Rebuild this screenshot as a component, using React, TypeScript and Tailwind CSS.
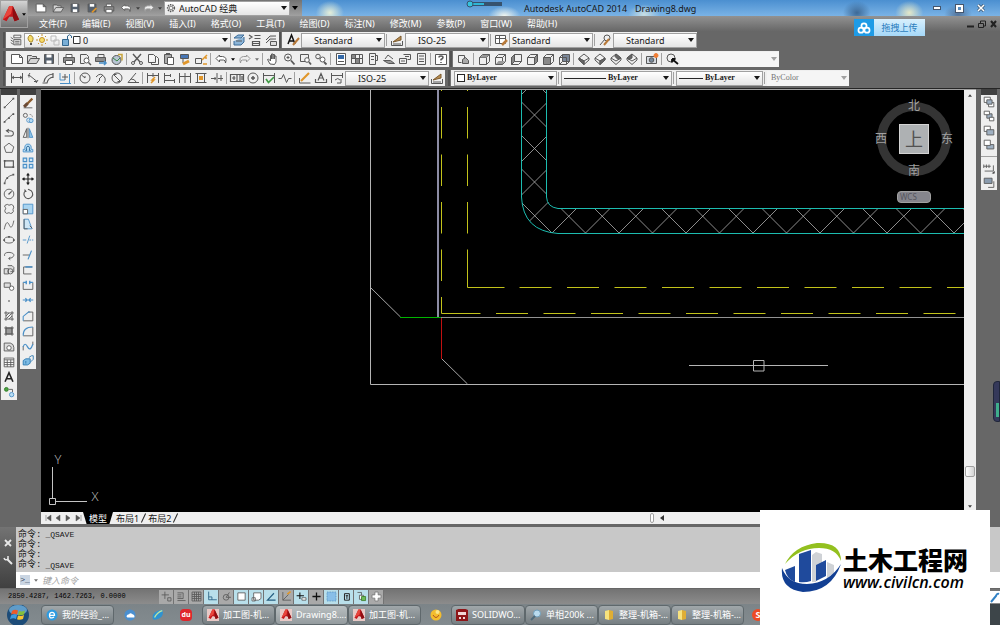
import React from 'react';
import clsx from 'clsx';

const INK = '#585858';
const BLUE = '#4a90c8';
const ORANGE = '#e0962a';

// 16x16 line icons
const icons: Record<string, React.ReactNode> = {
  // file
  new: <path d="M2.5 3.5h8l3 3v6h-11z M10.5 3.5v3h3" fill="#fff" />,
  open: <path d="M2.5 12.5v-8h4l1 1h4v2 M2.5 12.5l3-5h9l-3 5z" fill="#d5d5d5" />,
  save: <><path d="M3.5 3.5h9v9h-9z" fill="#56616e" /><path d="M5.5 3.5h5v3h-5z M5.5 9.5h5v3h-5z" fill="#fff" stroke="none" /></>,
  saveAs: <><path d="M3.5 3.5h9v9h-9z" fill="#56616e" /><path d="M5.5 3.5h5v3h-5z" fill="#fff" stroke="none" /><path d="M8 13l5-5" stroke={ORANGE} strokeWidth="2" /></>,
  print: <><path d="M5 6V3.500h6V6" fill="#fff" /><path d="M2.500 6.500h11v5h-11z" fill="#8d8d8d" /><path d="M4.500 9.500h7v4h-7z" fill="#fff" /></>,
  preview: <><path d="M3.500 12.500v-9h6l2 2v2 M3.500 12.500h4" /><circle cx="9.500" cy="9.500" r="2.500" fill="#fff" /><path d="M11.500 11.500l2.500 2.500" strokeWidth="1.500" /></>,
  publish: <><path d="M5 6V3.500h6V6" /><path d="M2.500 6.500h10v4h-10z" fill="#8d8d8d" /><path d="M6 12h7m-2-2l2 2l-2 2" stroke={BLUE} strokeWidth="1.500" /></>,
  globe: <><circle cx="7.500" cy="9" r="4.500" fill="#b9c6d4" /><path d="M4 7l4 3l3-3" stroke="#3d8a48" /><path d="M9 3.500h4v6" stroke="#c7a53b" strokeWidth="1.500" /></>,
  cut: <><path d="M4 3l7 8 M12 3l-7 8" strokeWidth="1.400" /><circle cx="4" cy="12" r="1.500" /><circle cx="12" cy="12" r="1.500" /></>,
  copy: <path d="M3.500 3.500h5l2 2v6h-7z M6.500 11.500v2h7v-6l-2-2h-1" fill="#f7f7f7" />,
  paste: <><path d="M3.500 3.500h7v9h-7z" fill="#aaa" /><path d="M6.500 6.500h6v7h-6z" fill="#fff" /><path d="M5 3h4" strokeWidth="2" /></>,
  match: <><path d="M3.500 3.500h8v4h-8z" fill="#4776b5" /><path d="M6 8v4" /><path d="M6 13l6-3" stroke={ORANGE} strokeWidth="3" /></>,
  blockEdit: <><path d="M2.500 7.500h6v5h-6z" /><path d="M9 9l5-5 M12 7h2 M10 13h4" stroke={ORANGE} strokeWidth="1.500" /></>,
  undo: <path d="M6.500 4L3 7.500L6.500 11V9h4q2 0 2 3q2-6-3-6.500H6.500z" fill="#fff" />,
  redo: <path d="M9.500 4L13 7.500L9.500 11V9h-4q-2 0-2 3q-2-6 3-6.500h3z" fill="#eee" stroke="#999" />,
  pan: <path d="M5 13L2.500 8.500l1-.5L5.500 10V4.500h1V8V3h1.500v5V3.500h1.500V8V5h1.500v6l-1.500 2.500z" fill="#fff" />,
  zoomRt: <><circle cx="7" cy="6.500" r="3.500" /><path d="M10 9.500l3.500 4" strokeWidth="1.800" /><path d="M5.500 6.500h3 M7 5v3" /></>,
  zoomWin: <><path d="M3.500 3.500h8v7h-8z" /><circle cx="10" cy="9" r="2.300" fill="#fff" /><path d="M12 11l2 2.500" strokeWidth="1.800" /></>,
  zoomPrev: <><circle cx="5" cy="5.500" r="2.300" /><circle cx="9.500" cy="8.500" r="2.500" fill="#fff" /><path d="M11 11l2.500 2.500" strokeWidth="1.800" /></>,
  properties: <><path d="M3.500 2.500h9v11h-9z" fill="#fff" /><path d="M5 4h6v4H5z" fill="#356aa8" stroke="none" /><path d="M5 10.500h6" /></>,
  designCenter: <><path d="M2.500 3.500h11v9h-11z M2.500 7.500h11 M6.500 3.500v9 M10.500 3.500v9" /><path d="M3 4h3v3H3z M7 8h3v4H7z" fill="#888" stroke="none" /></>,
  toolPalettes: <path d="M4.500 2.500h6v11h-6z M10.500 4.500h2v5h-2 M6 5.500h3 M6 8.500h3" />,
  sheetSet: <><path d="M2.500 9.500l5 3h6l-4-3z" fill="#999" /><path d="M4 8l3-4l5 4" /></>,
  markup: <path d="M2.500 7.500h7v5h-7z M6.500 3.500h7v5h-3 M4 10h4 M8 5.500h4" />,
  calc: <path d="M4.500 2.500h8v11h-8z M6 5h5 M6 8h5 M6 10.500h5" />,
  help: <><path d="M2.500 3.500h11v10h-11z" fill="#fff" /><path d="M6 6.500q0-1.500 2-1.500t2 1.500q0 1-2 2v1 M8 11v1" strokeWidth="1.500" /></>,
  // views
  namedView: <><path d="M2.500 4.500h6v6 M2.500 4.500v7h3" /><path d="M6.500 12.500v-4l3-2l3 3v3z" fill="#aaa" /></>,
  viewTop: <><path d="M3.500 6.500h7v7h-7z M10.500 13.500l3-3v-7h-7l-3 3 M10.500 6.500l3-3" /><path d="M4 6.500l2.500-2.500h6.500l-2.500 2.500z" fill="#999" stroke="none" /></>,
  viewBottom: <><path d="M3.500 6.500l3-3h7v7l-3 3h-7z M10.500 6.500v7 M3.500 6.500h7l3-3" /><path d="M4 13l2.500-3H13l-2.500 3z" fill="#999" stroke="none" /></>,
  viewLeft: <><path d="M3.500 6.500l3-3h7v7l-3 3h-7z M6.500 3.500v7h7 M6.500 10.500l-3 3" /><path d="M3.500 6.500l3-3v7l-3 3z" fill="#888" /></>,
  viewRight: <><path d="M3.500 6.500l3-3h7v7l-3 3h-7z M3.500 6.500h7v7" /><path d="M10.500 6.500l3-3v7l-3 3z" fill="#888" /></>,
  viewFront: <><path d="M3.500 6.500l3-3h7v7l-3 3 M10.500 6.500l3-3" /><path d="M3.500 6.500h7v7h-7z" fill="#888" /></>,
  viewBack: <><path d="M6.500 3.500h7v7h-7z" fill="#7b8798" /><path d="M3.500 6.500h7v7h-7z M3.500 6.500l3-3 M3.500 13.500l3-3 M10.500 13.500l3-3" /></>,
  swIso: <><path d="M8 3l5 4v2l-5 4.500L3 9V7z M3 7l5 3l5-3 M8 10v3.500" /><path d="M3 7l5 3v3.500L3 9z" fill="#666" /></>,
  seIso: <><path d="M8 3l5 4v2l-5 4.500L3 9V7z M3 7l5 3l5-3 M8 10v3.500" /><path d="M8 10l5-3v2l-5 4.500z" fill="#666" /></>,
  neIso: <><path d="M8 3l5 4v2l-5 4.500L3 9V7z M3 7l5 3l5-3" /><path d="M8 3l5 4l-3 1.500l-3-3z" fill="#666" /></>,
  nwIso: <><path d="M8 3l5 4v2l-5 4.500L3 9V7z M3 7l5 3l5-3" /><path d="M8 3v4L5 8.500L3 7z" fill="#666" /></>,
  camera: <><path d="M2.500 5.500h10v7h-10z" fill="#d5dbe2" /><circle cx="7.500" cy="9" r="2.300" fill="#77889b" /><circle cx="12" cy="4.500" r="2" fill="#ef7d35" stroke="#ef7d35" /></>,
  orbitBack: <><circle cx="7" cy="7" r="4" /><path d="M14 13L8 8 M8 8h3.500 M8 8v3.500" stroke="#111" strokeWidth="1.800" /></>,
  // dimensions
  dimLinear: <path d="M2.500 3v10 M13.500 3v10 M2.500 7.500h11 M5 6l-2 1.500l2 1.500 M11 6l2 1.500l-2 1.500" />,
  dimAligned: <path d="M3 6l2-3 M11 13l2-3 M4 5l8 6.500 M4 5v2.500 M12 11.500H9" />,
  dimArc: <path d="M3 12q1-7 9-8 M6 13q1-5 6-6 M1.500 13h5 M12 3v5" strokeWidth="1.200" />,
  dimOrdinate: <><path d="M3 3v7h5 M3 13.500h11 M12.500 4v9" stroke={BLUE} /><path d="M8 4v6 M5 7h6" /></>,
  dimRadius: <><circle cx="8" cy="8" r="5" /><path d="M8 8L4.500 5 M8 8V6" /></>,
  dimJogged: <path d="M3 7q5-6 9 1q1 3-1 5 M4 13l3-3l-1-1l4-4" />,
  dimDiameter: <><circle cx="8" cy="8" r="5" /><path d="M4.500 4.500l7 7 M4.500 4.500h3 M11.500 11.500h-3" /></>,
  dimAngular: <path d="M14 12.500H3L11 3 M6 9q4 0 5 3" />,
  dimQuick: <><path d="M2.500 3v10 M13.500 3v10 M2.500 5.500h11 M8 3v4" /><path d="M6 13l3-3H7l3-3" stroke={ORANGE} strokeWidth="1.500" /></>,
  dimBaseline: <path d="M3.500 3v10 M3.500 5.500h6 M9.500 4v3 M3.500 10.500h10 M13.500 9v4" />,
  dimContinue: <path d="M2.500 3v10 M8 3v10 M13.500 3v10 M2.500 6.500h11" />,
  dimSpace: <><path d="M2.500 3.500h11 M2.500 12.500h11 M4.500 3v10 M11.500 3v10" /><path d="M6 6h4v4H6z" fill={ORANGE} stroke="none" /></>,
  dimBreak: <path d="M2 8.500h5 M9 8.500h5 M8 3v10 M12 5v6 M6 7v3" />,
  tolerance: <path d="M1.500 4.500h13v7h-13z M8 4.500v7 M11 4.500v7 M3 8h3.500 M5 6v4 M13 6v4" strokeWidth="1.200" />,
  centerMark: <><circle cx="8" cy="8" r="5" /><path d="M8 6v4 M6 8h4" strokeWidth="1.500" /></>,
  inspect: <><path d="M2.500 3v10 M13.500 3v10 M2.500 5.500h11" /><path d="M5 9l2.500 3.500L13 7" stroke="#3f9a45" strokeWidth="1.700" /></>,
  jogLine: <path d="M1.500 8.500h3l2-4l3 8l2-4h3" />,
  dimEdit: <><path d="M2.500 8v5h11" /><path d="M4 11l8-8" stroke={ORANGE} strokeWidth="2.200" /></>,
  dimTextEdit: <path d="M2.500 9v4 M13.500 9v4 M2.500 12.500h11 M5 10.500l3-7l3 7 M6.500 8h3" strokeWidth="1.200" />,
  dimUpdate: <path d="M2.500 3v10 M13.500 3v5 M2.500 5.500h11 M6 10q3-3 5 0 M12 9v4H8" />,
  dimStyle: <><path d="M2.500 9v4.500h11V9 M4 12h8" /><path d="M4 10l8-6v4z" fill="#b98d50" stroke="#7b5a2e" /></>,
  // layers
  layerProps: <path d="M5.500 2.500h8v3h-8z M5.500 7.500h8v6h-8z M2 5l3 2 M2 8l3 2 M2 11l3 2 M7 9.500h5 M7 11.500h5" />,
  layerCurrent: <><path d="M3 6l4-3h6l-3 3z M3 9v4h7l3-3V5" fill="#8cb5d8" stroke="#3c6c99" /><path d="M5 9h6" /></>,
  layerPrev: <path d="M7.500 3.500h6 M7.500 6.500h6 M5.500 9.500h7v4h-7z M2 3l3 2l-3 2 M6 11.500h6" strokeWidth="1.200" />,
  layerState: <path d="M3 8l4-4h6 M3 11l4-4h6 M7.500 9.500h6v4h-6z" fill="#ddd" />,
  textStyle: <><path d="M3 12l3.500-9l3.500 9 M4.500 9h4" stroke="#111" strokeWidth="1.500" /><path d="M8 13l6-7" stroke="#b87a3a" strokeWidth="2" /></>,
  tableStyle: <><path d="M2.500 3.500h10v8h-10z M2.500 6.500h10 M6.500 3.500v8" fill="#fff" /><path d="M9 13l5-5" stroke="#b87a3a" strokeWidth="2.500" /></>,
  leaderStyle: <><circle cx="10" cy="6" r="3" /><path d="M3 13L8 7" /><path d="M7 13l5-6" stroke="#b87a3a" strokeWidth="2" /></>,
  // draw
  line: <><path d="M3 13L13 3" /><path d="M2 12h2v2H2z M12 2h2v2h-2z" fill={INK} stroke="none" /></>,
  xline: <><path d="M2 13L13 3" /><path d="M2 11.500h2v2H2z M7 7h2v2H7z M12 2.500h2v2h-2z" fill={INK} stroke="none" /></>,
  pline: <path d="M3 11.500h6q4 0 4-3t-4-3H6 M8 3.500l-3 2l3 2" strokeWidth="1.200" />,
  polygon: <path d="M8 2.500l5.500 4.200l-2 6.300h-7l-2-6.300z" />,
  rect: <><path d="M3 4.500h10v7H3z" strokeWidth="1.300" /><path d="M2 3.500h2v2H2z M12 10.500h2v2h-2z" fill={INK} stroke="none" /></>,
  arc: <><path d="M3 13Q4 5 13 3" /><path d="M2 12h2v2H2z M12 2h2v2h-2z M5 6h2v2H5z" fill={INK} stroke="none" /></>,
  circle: <><circle cx="8" cy="8" r="5.500" /><path d="M8 8l3-3 M7 8h2" strokeWidth="1.400" /></>,
  cloud: <path d="M4.500 7Q2 6 3.500 3.700q3-2 4.500 0q3-2 5 .5q1 3-.5 4q1.500 3-1 4.500q-2 1-3.500-.5q-3 2-4.500-.5q-1-2 1-4.700z" />,
  spline: <path d="M2.500 13C5 2 7 5 8.500 8.500S12 11 13.500 3" />,
  ellipse: <><ellipse cx="8" cy="8" rx="5.500" ry="3.500" /><path d="M7 3.500h2v2H7z M1.500 7h2v2h-2z M12.500 7h2v2h-2z" fill={INK} stroke="none" /></>,
  ellipseArc: <path d="M3 9Q2 5 8 5q6 .5 5.500 3.500T8 12 M9.500 10.500L7.500 12l2 1.500" />,
  insert: <><path d="M6.500 3h5l2 2v5h-4 M2.500 6.500h5v6h-5z" fill="#ddd" /><circle cx="9.500" cy="9.500" r="3" /></>,
  makeBlock: <><path d="M2.500 4.500h7v5h-7z" fill="#ddd" /><circle cx="11" cy="10.500" r="2.500" fill="#fff" /></>,
  point: <path d="M7.200 7.200h1.600v1.600H7.200z" fill={INK} stroke="none" />,
  hatch: <path d="M2.500 4.500h11 M2.500 11.500h11 M4.500 2.500v11 M11.500 2.500v11 M4.500 8l3.500-3.500 M5 11l6-6 M8 11.500L11.500 8" />,
  gradient: <><path d="M4.500 4.500h7v7h-7z" fill="#999" /><path d="M2.500 4.500h11 M2.500 11.500h11 M4.500 2.500v11 M11.500 2.500v11" /></>,
  region: <><path d="M2.500 3.500h7q4 1 4 5v4h-11z" fill="#ddd" /><circle cx="8" cy="9" r="2.500" fill="#fff" /></>,
  table: <path d="M2.500 3.500h11v10h-11z M2.500 5.500h11 M2.500 8.500h11 M2.500 11h11 M6 5.500v8 M10 5.500v8" fill="#fff" />,
  mtext: <path d="M3.500 13.500L8 3l4.500 10.500 M5 10h6" stroke="#222" strokeWidth="1.800" />,
  addSelected: <><circle cx="5" cy="5" r="2.200" fill="#4aa23f" stroke="#2f7a28" /><path d="M8 5h4v3" /><circle cx="11" cy="11" r="2.500" fill="#b7dcf3" stroke={BLUE} /></>,
  // modify
  erase: <><path d="M3 13.500h10" /><path d="M6 10l7-7" stroke="#8a5a2c" strokeWidth="2.500" /><path d="M3.500 12.500l4-4" stroke="#6b4a35" strokeWidth="3.500" /></>,
  copyObj: <><circle cx="5" cy="5" r="2.300" /><path d="M10 4q3 0 3 3" strokeDasharray="1 1" /><circle cx="9" cy="10.500" r="2.500" stroke={BLUE} /><circle cx="11.500" cy="11" r="2.300" fill="#b7dcf3" stroke={BLUE} /></>,
  mirror: <><path d="M6.500 3v10H2.500z" /><path d="M9.500 3v10h4z" fill="#8ec4e8" stroke={BLUE} /><path d="M8 2v12" /></>,
  offset: <><path d="M2.500 12.500v-3h2q-1-6 3.500-6t3.500 6h2v3z" stroke={BLUE} fill="#b7dcf3" /><path d="M5 11h1.500q-1-5 1.500-5t1.500 5H11" stroke="#1e5f95" /></>,
  array: <path d="M2.500 2.500h4v4h-4z M9.500 2.500h4v4h-4z M2.500 9.500h4v4h-4z M9.500 9.500h4v4h-4z" stroke={BLUE} fill="#cfe6f5" strokeWidth="1.300" />,
  move: <path d="M8 2v12 M2 8h12 M6.500 4L8 2l1.500 2 M6.500 12L8 14l1.500-2 M4 6.500L2 8l2 1.500 M12 6.500L14 8l-2 1.500" stroke="#222" strokeWidth="1.300" />,
  rotate: <path d="M5 4.500a5 5 0 1 0 5-1 M4 3l2 2.500 M10 3.500l-2-1" strokeWidth="1.300" />,
  scale: <><path d="M2.500 2.500h11v11h-11z" fill="#a9d4f0" stroke={BLUE} /><path d="M2.500 8.500h5v5h-5z" fill="#fff" /></>,
  stretch: <><path d="M3.500 2.500h5l4 11h-9z" stroke={BLUE} fill="#cfe6f5" /><path d="M3.500 2.500v11h4 M10 10l3 3" /></>,
  trim: <><path d="M2 8h4 M7 12l3-9" stroke={BLUE} /><path d="M9.500 8H14" stroke={BLUE} strokeDasharray="2 1" /></>,
  extend: <><path d="M2 8h8" /><path d="M8 13l4-10" stroke={BLUE} strokeWidth="1.300" /></>,
  breakPt: <><path d="M3 12.500v-8h10 M3 12.500h9" stroke={INK} /><path d="M5 4.500h8" stroke={BLUE} strokeWidth="1.700" /></>,
  breakObj: <><path d="M2.500 5v8h11V5" /><path d="M2.500 5h4 M9.500 5h4 M6 3v4 M10 3v4" stroke={BLUE} strokeWidth="1.600" /></>,
  join: <path d="M2 8h12 M5 6l2 2l-2 2 M11 6L9 8l2 2" stroke={BLUE} strokeWidth="1.300" />,
  chamfer: <><path d="M2.500 13.500h11v-10H8" /><path d="M2.500 13.500v-5l6-5h2" stroke={BLUE} strokeWidth="1.200" /></>,
  fillet: <><path d="M2.500 13.500h11v-10" /><path d="M2.500 13.500Q2 3.500 13.500 3.500" stroke={BLUE} strokeWidth="1.200" /></>,
  blend: <><path d="M2.500 13V8 M13.500 3v4" /><path d="M2.500 9q2-6 5 0t6-3" stroke={BLUE} strokeWidth="1.400" /></>,
  explode: <><path d="M2.500 7.500l3-2h5v5l-3 2h-5z" fill="#7fbce4" stroke="#2c78b0" /><path d="M9 4l3-2h2v4l-3 3 M5.500 8v3" stroke="#2c78b0" /></>,
  // draw order
  orderFront: <><path d="M2.500 2.500h7v6h-7z M7.500 8.500h6v5h-6z" fill="#fff" /><path d="M5.500 5.500h6v5h-6z" fill="#9fb0c2" /></>,
  orderBack: <><path d="M5.500 5.500h6v5h-6z" fill="#9fb0c2" /><path d="M2.500 2.500h6v4h-6z M8.500 9.500h5v4h-5z" fill="#fff" /></>,
  orderAbove: <><path d="M2.500 2.500h7v6h-7z" fill="#fff" /><path d="M5.500 6.500h8v6h-8z" fill="#9fb0c2" /></>,
  orderUnder: <><path d="M5.500 7.500h8v5h-8z" fill="#9fb0c2" /><path d="M2.500 2.500h7v6h-7z" fill="#fff" /></>,
  orderText: <><path d="M2 4v4 M5 4v4 M8 4v4 M2 6h8 M3 11.500h10V5" /><path d="M12 14l2-2v2z" fill="#000" /></>,
  orderHatch: <><path d="M2.500 2.500h9v6h-9z" fill="#8a9bae" /><path d="M13.500 6v7H7" /></>,
  // drafting aids
  infer: <path d="M6 2v9 M2 6h9 M9.500 9.500h4v4h-4z" />,
  snap: <path d="M3 3.500h7v7H3 M3 6h5 M3 8.500h5 M3 13h10" />,
  grid: <path d="M2.500 2.500h11v11h-11z M2.500 5.500h11 M2.500 8h11 M2.500 10.500h11 M5.500 2.500v11 M8 2.500v11 M10.500 2.500v11" />,
  ortho: <path d="M4.500 2v10h10 M4.500 8.500h4v3.500" stroke="#245d80" />,
  polar: <><circle cx="7.500" cy="9" r="3.500" /><path d="M7.500 9h6 M7.500 9l4-6" /></>,
  osnap: <path d="M3.500 3.500h9v9h-9z" fill="#fff" stroke="#555" />,
  osnap3d: <path d="M4.500 3.500h9v7l-3 2h-6z M2.500 9.500h4v4h-4z" fill="#fff" />,
  otrack: <path d="M13 12.500H3L11 4" stroke="#245d80" strokeWidth="1.400" />,
  ducs: <><path d="M3.500 2.500v10h10 M3.500 12.500l7-7" /><path d="M9 5l4-3" stroke={ORANGE} strokeWidth="2" /></>,
  dyn: <><path d="M6 3v8 M2 7h9" stroke="#111" strokeWidth="1.300" /><path d="M8.500 9.500h5v3h-5z" fill="#fff" /></>,
  lwt: <path d="M8 3v10 M3 8h10" stroke="#111" strokeWidth="1.600" />,
  tpy: <path d="M2.500 2.500h11v11h-11z" fill="#88bfe8" stroke="#4a86b8" strokeDasharray="1 1" />,
  qp: <path d="M5.500 4.500h6v8h-6z M7 7h3 M8.500 7v4" stroke="#222" strokeWidth="1.200" />,
  selCycle: <><path d="M3 3h5v5" /><path d="M5.500 6.500h5v5h-5z" fill="#fff" /><path d="M8 8h5v5H8z" fill="#6dbb56" stroke="#3b7c2a" /></>,
  monitor: <path d="M6 2.500h4V6h3.500v4H10v3.500H6V10H2.500V6H6z" fill="#fff" stroke="#777" />,
  gear: <><circle cx="8" cy="8" r="4.500" strokeWidth="2" strokeDasharray="2 1.200" /><circle cx="8" cy="8" r="2.500" /></>,
};

const Icon = ({ name, className = 'size-4' }: { name: string; className?: string }) => (
  <svg viewBox="0 0 16 16" fill="none" stroke={INK} className={clsx('shrink-0', className)} aria-hidden="true">
    {icons[name]}
  </svg>
);

const Caret = ({ className, small }: { className?: string; small?: boolean }) => (
  <svg viewBox="0 0 6 4" fill="currentColor" className={clsx('shrink-0', small ? 'h-[3px] w-1' : 'h-1 w-1.5', className)} aria-hidden="true">
    <path d="M0 0h6L3 4z" />
  </svg>
);

const Tools = ({ items }: { items: string[] }) => (
  <>
    {items.map((item, i) =>
      item === '|' ? (
        <span key={i} className="mx-px h-3 w-0.5 border-l border-neutral-400" />
      ) : (
        <button key={i} aria-label={item} className="flex h-4 w-4 items-center justify-center">
          <Icon name={item} />
        </button>
      )
    )}
  </>
);

type ComboProps = {
  label: string;
  value: string;
  className: string;
  textClass?: string;
  children?: React.ReactNode;
};

const Combo = ({ label, value, className, textClass = 'pl-2 text-[9px]', children }: ComboProps) => (
  <div className={clsx('flex h-[15px] items-center gap-0.5 border border-neutral-400 bg-linear-to-b from-white to-neutral-200 pr-0.5', className)}>
    {children}
    <select aria-label={label} className={clsx('h-full min-w-0 flex-1 appearance-none bg-transparent text-neutral-900', textClass)}>
      <option>{value}</option>
    </select>
    <Caret className="text-neutral-900" />
  </div>
);

const Bar = ({ children }: { children?: React.ReactNode }) => (
  <div className="flex h-4 items-center bg-[#efefef]">
    <span className="mr-[3px] h-full w-[3px] border-r border-neutral-500 bg-neutral-600" />
    {children}
  </div>
);

const Palette = ({ items, className }: { items: string[]; className: string }) => (
  <div className={clsx('flex w-4 shrink-0 flex-col bg-[#efefef]', className)}>
    <span className="h-[6px] bg-neutral-700" />
    {items.map((item, i) =>
      item === '|' ? (
        <span key={i} className="my-1 h-px bg-neutral-400" />
      ) : (
        <button key={i} aria-label={item} className="flex min-h-0 flex-1 items-center justify-center">
          <Icon name={item} className="size-[14px]" />
        </button>
      )
    )}
  </div>
);

const menus = ['文件(F)', '编辑(E)', '视图(V)', '插入(I)', '格式(O)', '工具(T)', '绘图(D)', '标注(N)', '修改(M)', '参数(P)', '窗口(W)', '帮助(H)'];

const AcadMark = ({ className }: { className: string }) => (
  <svg viewBox="0 0 20 20" className={clsx('shrink-0', className)} aria-hidden="true">
    <path d="M8 1h4l7 15-5 2-2-5H8l-3 5-4-2z" fill="#c4161c" />
    <path d="M8 1h4l-2 9-9 6z" fill="#e8453c" />
    <path d="M12 1l7 15-5 2-2-5z" fill="#8e0e12" />
  </svg>
);

const Header = () => (
  <header className="flex h-[31px] shrink-0">
    <button aria-label="AutoCAD" className="flex h-7 w-7 shrink-0 items-center justify-center gap-0.5 border border-neutral-400 bg-linear-to-b from-neutral-300 to-neutral-500">
      <AcadMark className="size-[18px]" />
      <Caret small />
    </button>
    <div className="flex min-w-0 flex-1 flex-col">
      <div className="flex h-4">
        <div className="flex w-[274px] shrink-0 items-center bg-linear-to-b from-neutral-500 to-neutral-400 pl-1">
          {['new', 'open', 'save', 'saveAs', 'print', 'undo'].map((n) => (
            <button key={n} aria-label={n} className="flex w-[17px] justify-center">
              <Icon name={n} className="size-[14px]" />
            </button>
          ))}
          <Caret small className="mx-0.5 text-neutral-700" />
          <button aria-label="redo"><Icon name="redo" className="size-[14px]" /></button>
          <Caret small className="mx-0.5 text-neutral-700" />
          <Combo label="工作空间" value="AutoCAD 经典" className="w-[126px]" textClass="text-[9px]">
            <Icon name="gear" className="size-3" />
          </Combo>
          <Caret className="ml-0.5" />
        </div>
        <div className="relative flex min-w-0 flex-1 items-center bg-[radial-gradient(ellipse_14px_12px_at_4%_80%,#e5eed8,transparent),radial-gradient(ellipse_16px_10px_at_29%_100%,#f3f6ee,transparent),radial-gradient(ellipse_16px_10px_at_49%_90%,#c9dfe4,transparent),radial-gradient(ellipse_14px_12px_at_79.5%_80%,#3d6996,transparent),radial-gradient(ellipse_14px_12px_at_87%_80%,#e5e8c8,transparent),radial-gradient(ellipse_14px_10px_at_94%_90%,#54749a,transparent),linear-gradient(#4b8fd0,#7ab3e6)] text-[9px] text-neutral-900">
          <svg viewBox="0 0 40 8" className="absolute top-0 left-[162px] h-2 w-10" aria-hidden="true">
            <path d="M6 4h32" stroke="#36526e" strokeWidth="4" />
            <path d="M6 4h14" stroke="#2fb6d6" strokeWidth="2" />
            <circle cx="6" cy="4" r="3" fill="#35c3de" stroke="#36526e" />
          </svg>
          <span className="ml-[222px]">Autodesk AutoCAD 2014</span>
          <span className="ml-2">Drawing8.dwg</span>
          <div className="ml-auto flex gap-1.5 pr-[11px] text-white">
            <button aria-label="最小化" className="flex h-3 w-4 items-center justify-center"><span className="h-1 w-2 border border-slate-600 bg-white" /></button>
            <button aria-label="还原" className="flex h-3 w-4 items-center justify-center"><span className="size-[7px] border-2 border-white outline outline-slate-600" /></button>
            <button aria-label="关闭" className="flex h-3 w-4 items-center justify-center">
              <svg viewBox="0 0 8 8" className="size-2" aria-hidden="true"><path d="M1 1l6 6M7 1L1 7" stroke="#3c566f" strokeWidth="3" /><path d="M1 1l6 6M7 1L1 7" stroke="#fff" strokeWidth="1.5" /></svg>
            </button>
          </div>
        </div>
      </div>
      <nav className="relative flex flex-1 items-center gap-[15px] bg-linear-to-b from-[#929292] to-[#686868] pl-[11px] text-[9px] text-white">
        {menus.map((m) => (
          <button key={m} className="whitespace-nowrap">{m}</button>
        ))}
        <button className="absolute top-[3px] right-[75px] z-10 flex h-[17px] w-[71px] items-center bg-linear-to-b from-[#d8effc] to-[#a5d8f8] text-[9px] text-[#2c7dbd]">
          <span className="flex h-full w-5 items-center justify-center bg-[#1f9be6]">
            <svg viewBox="0 0 16 14" fill="none" stroke="#fff" strokeWidth="2" className="h-3 w-3.5" aria-hidden="true">
              <circle cx="8" cy="4.500" r="3" /><circle cx="4.500" cy="9.500" r="3" /><circle cx="11.500" cy="9.500" r="3" />
            </svg>
          </span>
          <span className="flex-1 text-center">拖拽上传</span>
        </button>
        <svg viewBox="0 0 32 8" fill="none" stroke="#222" className="absolute right-0.5 h-2 w-8" aria-hidden="true">
          <path d="M1 6.500h7" strokeWidth="2" />
          <path d="M12.500 3.500h5v4h-5z M14.500 3V1h5v5h-2" />
          <path d="M25 1l5 6M30 1l-5 6" strokeWidth="2" />
        </svg>
      </nav>
    </div>
  </header>
);

const byLayerText = 'font-["Liberation_Serif"] text-[8px] font-bold';

const Toolbars = () => (
  <div className="flex shrink-0 flex-col items-start gap-[3px] pt-px pb-0.5 pl-[3px]">
    <div className="flex">
      <Bar>
        <button aria-label="图层特性" className="mr-px"><Icon name="layerProps" className="size-[14px]" /></button>
        <Combo label="图层" value="0" className="w-[207px]" textClass="text-[9px]">
          <svg viewBox="0 0 56 14" fill="none" className="h-3.5 w-14" aria-hidden="true">
            <path d="M5 9Q1 5 5 2q5 2 2 7z" fill="#f6dc6a" stroke="#a98b2e" /><path d="M5 11h2" stroke="#555" strokeWidth="2" />
            <circle cx="17" cy="7" r="2.500" fill="#f6dc6a" stroke="#c4932c" /><path d="M17 1v2M17 11v2M11 7h2M21 7h2M13 3l1 1M20 10l1 1M21 3l-1 1M14 10l-1 1" stroke="#c4932c" />
            <path d="M26 3h5v5h-5z M29 7h5v5h-5z" stroke="#bbb" />
            <path d="M37.500 6.500h6v6h-6z" fill="#79aed6" stroke="#33678f" /><path d="M42.500 6V3q2-2.500 4 0v2" stroke="#33678f" />
            <path d="M48.500 3.500h6.500v7h-6.500z" fill="#fff" stroke="#333" />
          </svg>
        </Combo>
        <Tools items={['layerCurrent', 'layerPrev', 'layerState']} />
      </Bar>
      <Bar>
        <Tools items={['textStyle']} />
        <Combo label="文字样式" value="Standard" className="w-[84px]" textClass="pl-3 text-[9px]" />
        <Tools items={['|', 'dimStyle']} />
        <Combo label="标注样式" value="ISO-25" className="w-[84px]" textClass="pl-3 text-[9px]" />
        <Tools items={['|', 'tableStyle']} />
        <Combo label="表格样式" value="Standard" className="w-[84px]" textClass="pl-0.5 text-[9px]" />
        <Tools items={['|', 'leaderStyle']} />
        <Combo label="多重引线样式" value="Standard" className="w-[84px]" textClass="pl-3 text-[9px]" />
      </Bar>
    </div>
    <div className="flex gap-px">
      <Bar>
        <Tools items={['new', 'open', 'save', '|', 'print', 'preview', 'publish', 'globe', '|', 'cut', 'copy', 'paste', 'match', 'blockEdit', '|', 'undo']} />
        <Caret small className="mx-0.5" />
        <Tools items={['redo']} />
        <Caret small className="mx-0.5 text-neutral-500" />
        <Tools items={['|', 'pan', 'zoomRt', 'zoomWin', 'zoomPrev', '|', 'properties', 'designCenter', 'toolPalettes', 'sheetSet', 'markup', 'calc', '|', 'help']} />
      </Bar>
      <Bar>
        <Tools items={['namedView', '|', 'viewTop', 'viewBottom', 'viewLeft', 'viewRight', 'viewFront', 'viewBack', '|', 'swIso', 'seIso', 'neIso', 'nwIso', '|', 'camera', '|', 'orbitBack']} />
        <div className="flex h-[15px] w-[99px] items-center bg-neutral-100 pr-0.5">
          <select aria-label="视图" disabled className="h-full min-w-0 flex-1 appearance-none bg-transparent"><option /></select>
          <Caret className="text-neutral-400" />
        </div>
      </Bar>
    </div>
    <div className="flex gap-[3px]">
      <Bar>
        <Tools items={['dimLinear', 'dimAligned', 'dimArc', 'dimOrdinate', '|', 'dimRadius', 'dimJogged', 'dimDiameter', 'dimAngular', '|', 'dimQuick', 'dimBaseline', 'dimContinue', 'dimSpace', 'dimBreak', '|', 'tolerance', 'centerMark', 'inspect', 'jogLine', '|', 'dimEdit', 'dimTextEdit', 'dimUpdate']} />
        <Combo label="当前标注样式" value="ISO-25" className="w-[84px]" textClass="pl-3 text-[9px]" />
        <Tools items={['dimStyle']} />
      </Bar>
      <Bar>
        <Combo label="颜色" value="ByLayer" className="w-[103px] pl-0.5" textClass={byLayerText}>
          <span className="size-2 border border-neutral-800 bg-white" />
        </Combo>
        <Tools items={['|']} />
        <Combo label="线型" value="ByLayer" className="w-[111px] pl-0.5" textClass={byLayerText}>
          <span className="h-px w-[42px] bg-neutral-800" />
        </Combo>
        <Tools items={['|']} />
        <Combo label="线宽" value="ByLayer" className="w-[87px] pl-0.5" textClass={byLayerText}>
          <span className="h-px w-6 bg-neutral-800" />
        </Combo>
        <Tools items={['|']} />
        <div className="flex h-[15px] w-[82px] items-center bg-neutral-100 pr-0.5 pl-1">
          <select aria-label="打印样式" disabled className='h-full min-w-0 flex-1 appearance-none bg-transparent font-["Liberation_Serif"] text-[8px] text-neutral-500'>
            <option>ByColor</option>
          </select>
          <Caret className="text-neutral-400" />
        </div>
      </Bar>
    </div>
  </div>
);

const hatchY = [81.5, 115, 148.5, 182];
const hatchX = Array.from({ length: 40 }, (_, i) => 568.5 + i * 33.5);

const Drawing = () => (
  <div className="relative min-w-0 flex-1 overflow-hidden bg-black">
    <svg className="absolute inset-0 h-full w-full" fill="none" aria-label="Drawing8">
      <g transform="translate(-41 -90)">
        <path d="M370.500 90V384.500H2000" stroke="#b4b4b4" />
        <path d="M438 90V317" stroke="#8c8ca4" strokeWidth="2" />
        <path d="M441 317.500H2000" stroke="#929292" />
        <path d="M370.500 287.500l30 29.500 M441.500 358.500l26 25.500" stroke="#a8a8a8" />
        <path d="M400 317.500h41" stroke="#00b400" />
        <path d="M441.500 318v41" stroke="#c01010" />
        <g stroke="#c2c21a">
          <path d="M441.500 59.500V313.500" strokeDasharray="31.500 16" />
          <path d="M467.500 59.500V240" strokeDasharray="31.500 16" />
          <path d="M467.500 249.500V287.500h37" />
          <path d="M519.500 287.500H2000" strokeDasharray="32 15.500" />
          <path d="M441.500 313.500h39" />
          <path d="M496 313.500H2000" strokeDasharray="32 15.500" />
        </g>
        <g stroke="#b0b0b0" strokeWidth="0.800">
          {hatchY.map((y) => (
            <path key={y} d={`M521.500 ${y - 13}l25 25 M521.500 ${y + 13}l25-25`} />
          ))}
          <path d="M522 203l30 30 M548.500 202l-19 19" />
          {hatchX.map((x) => (
            <path key={x} d={`M${x - 7.500} 208.500l24.500 24.500 M${x - 16.500} 233l24.500-24.500`} />
          ))}
        </g>
        <path d="M521.500 90V197Q523 231 558 233.500H2000 M546.500 90V197Q547 207 558 208.500H2000" stroke="#1cbcb0" />
        <path d="M689 365.500h64 M764 365.500h64 M753.500 360.500h10.500v10.500h-10.500z M753 365.500h11" stroke="#b5b5b5" />
        <path d="M52.500 467V498 M56 501.500H87 M49.500 498.500h6v6h-6z" stroke="#c4c4c4" />
        <g fill="#c4c4c4" fontSize="13" fontWeight="300" fontFamily="Open Sans, sans-serif" textAnchor="middle">
          <text x="58" y="464">Y</text>
          <text x="95" y="501">X</text>
        </g>
      </g>
    </svg>
    <div className="absolute top-[12px] right-[12px] flex w-[76px] flex-col items-center text-[12px] leading-none text-neutral-400">
      <div className="relative flex size-[74px] items-center justify-center rounded-full border-[9px] border-[#343434]">
        <button className="flex size-[30px] items-center justify-center border border-neutral-300 bg-[#aeb1b3] text-lg leading-none text-neutral-600">上</button>
        <span className="absolute top-[-11px]">北</span>
        <span className="absolute bottom-[-10px]">南</span>
        <span className="absolute left-[-11px]">西</span>
        <span className="absolute right-[-11px]">东</span>
      </div>
      <button className="mt-[15px] h-3 w-[34px] rounded-sm border border-neutral-400 bg-[#85858c] pl-0.5 text-left text-[8px] leading-none text-[#55555e]">WCS</button>
    </div>
  </div>
);

const LayoutTabs = () => (
  <div className="flex h-3 shrink-0 items-stretch bg-[#efefef] text-[9px] text-neutral-900">
    <div className="flex items-center pl-0.5">
      {['M3 1v6M8 1L4 4l4 3z', 'M7 1L3 4l4 3z', 'M3 1l4 3-4 3z', 'M8 1v6M3 1l4 3-4 3z'].map((d, i) => (
        <button key={i} aria-label={`nav ${i + 1}`} className="w-2.5">
          <svg viewBox="0 0 10 8" className="h-2 w-2.5" aria-hidden="true"><path d={d} fill="#555" stroke="#555" strokeWidth="0.500" /></svg>
        </button>
      ))}
    </div>
    <button className="w-[30px] bg-black leading-none text-white [clip-path:polygon(0_0,100%_0,88%_100%,12%_100%)]">模型</button>
    {['布局1', '布局2'].map((t) => (
      <button key={t} className="flex items-center leading-none">
        <span className="px-[3px]">{t}</span>
        <span className="mx-px h-2.5 w-px rotate-[25deg] bg-neutral-800" />
      </button>
    ))}
    <span className="ml-auto" />
    <div className="flex w-[326px] items-center gap-1.5">
      <span className="h-2.5 w-1 rounded-sm border border-neutral-400 bg-white" />
      <svg viewBox="0 0 4 6" className="h-1.5 w-1" aria-hidden="true"><path d="M4 0v6L0 3z" fill="#333" /></svg>
    </div>
  </div>
);

const drawTools = ['line', 'xline', 'pline', 'polygon', 'rect', 'arc', 'circle', 'cloud', 'spline', 'ellipse', 'ellipseArc', 'insert', 'makeBlock', 'point', 'hatch', 'gradient', 'region', 'table', 'mtext', 'addSelected'];
const modifyTools = ['erase', 'copyObj', 'mirror', 'offset', 'array', 'move', 'rotate', 'scale', 'stretch', 'trim', 'extend', 'breakPt', 'breakObj', 'join', 'chamfer', 'fillet', 'blend', 'explode'];

const Workspace = () => (
  <main className="flex min-h-0 flex-1 border-t border-neutral-800">
    <div className="flex w-[41px] shrink-0 items-start gap-[3px] pl-px">
      <Palette items={drawTools} className="h-[311px]" />
      <Palette items={modifyTools} className="h-[280px]" />
    </div>
    <div className="flex min-w-0 flex-1 flex-col border-t border-neutral-400">
      <div className="flex min-h-0 flex-1">
        <Drawing />
        <div className="flex w-3 shrink-0 flex-col items-center bg-[#efefef] pt-1 pb-1">
          <Caret small className="rotate-180 text-neutral-700" />
          <span className="mt-auto mb-[28px] h-[11px] w-2.5 rounded-xs border border-neutral-400 bg-linear-to-r from-white to-neutral-300" />
          <Caret small className="text-neutral-700" />
        </div>
      </div>
      <LayoutTabs />
    </div>
    <div className="relative flex w-6 shrink-0 items-start justify-end pr-[3px]">
      <Palette items={['orderFront', 'orderBack', 'orderAbove', 'orderUnder', '|', 'orderText', 'orderHatch']} className="h-[101px]" />
      <div className="absolute top-[292px] right-0 flex h-[41px] w-[7px] items-end rounded-l-sm border border-[#20263a] bg-[#35395a] pb-1 pl-0.5">
        <span className="h-3.5 w-[3px] bg-[#3fae8c]" />
      </div>
    </div>
  </main>
);

const history = ['_QSAVE', '', '', '_QSAVE'];

const CommandLine = () => (
  <section className="mt-[3px] flex h-[61px] shrink-0">
    <div className="flex w-4 flex-col items-center gap-2 bg-linear-to-b from-neutral-500 to-neutral-700 pt-3 text-white">
      <button aria-label="关闭命令行">
        <svg viewBox="0 0 8 8" className="size-2" aria-hidden="true"><path d="M1 1l6 6M7 1L1 7" stroke="#e8e8e8" strokeWidth="1.800" /></svg>
      </button>
      <button aria-label="自定义">
        <svg viewBox="0 0 10 10" className="size-2.5" fill="none" aria-hidden="true"><path d="M4 4l5 5" stroke="#e8e8e8" strokeWidth="2" /><path d="M1 3q1 3 4 1V1" stroke="#e8e8e8" strokeWidth="1.500" /></svg>
      </button>
    </div>
    <div className="flex min-w-0 flex-1 flex-col">
      <div className="flex flex-1 flex-col justify-between bg-[#c8c8c8] pt-[3px] pb-px pl-0.5 text-[9px] text-neutral-900">
        {history.map((cmd, i) => (
          <p key={i} className="flex h-2.5 items-center gap-1 leading-none">
            <span className='font-["Liberation_Mono","Noto_Sans_CJK_SC",monospace]'>命令:</span>
            <span className='font-["Liberation_Mono",monospace] text-[8px]'>{cmd}</span>
          </p>
        ))}
      </div>
      <label className="flex h-4 items-center gap-1 bg-white pl-1">
        <span className='flex h-2.5 w-2.5 items-center justify-center bg-slate-300 font-["Liberation_Mono",monospace] text-[8px] leading-none text-slate-700'>&gt;_</span>
        <Caret small className="text-neutral-500" />
        <input aria-label="命令" placeholder="键入命令" className="min-w-0 flex-1 bg-transparent text-[9px] italic placeholder:text-neutral-400" />
      </label>
    </div>
  </section>
);

const aids: [string, boolean][] = [
  ['infer', false], ['snap', false], ['grid', false], ['ortho', true], ['polar', false],
  ['osnap', true], ['osnap3d', true], ['otrack', true], ['ducs', false], ['dyn', true],
  ['lwt', false], ['tpy', true], ['qp', true], ['selCycle', true], ['monitor', false],
];

const StatusBar = () => (
  <div className="mt-px flex h-[15px] shrink-0 items-center bg-linear-to-b from-neutral-500 to-[#8c8c8c]">
    <span className='w-[159px] pl-2 font-["Liberation_Mono",monospace] text-[7px] whitespace-pre text-black'>2850.4287, 1462.7263, 0.0000</span>
    {aids.map(([name, on]) => (
      <button
        key={name}
        aria-label={name}
        aria-pressed={on}
        className={clsx('flex h-3.5 w-[15px] items-center justify-center border-r border-neutral-500', on ? 'bg-[#b9dfea]' : 'bg-[#a9a9a9]')}
      >
        <Icon name={name} className="size-[13px]" />
      </button>
    ))}
    <svg viewBox="0 0 10 12" className="ml-auto h-3 w-2.5 bg-white" aria-hidden="true"><path d="M1 11l5-6q1-3 3-2" fill="none" stroke="#3181c4" strokeWidth="2" /></svg>
  </div>
);

const Task = ({ children, label, active, className = 'w-[73px]' }: { children: React.ReactNode; label: string; active?: boolean; className?: string }) => (
  <button
    className={clsx(
      'flex h-5 shrink-0 items-center gap-1 overflow-hidden rounded-sm border border-[#5f686c] pl-1 text-[9px] whitespace-nowrap text-white',
      active ? 'bg-linear-to-b from-[#b9bfc1] to-[#949b9e]' : 'bg-linear-to-b from-[#a0a7aa] to-[#767e82]',
      className
    )}
  >
    {children}
    {label}
  </button>
);

const Acad = () => (
  <span className="flex size-3 shrink-0 items-center justify-center bg-[#e8c9c6]"><AcadMark className="size-[11px]" /></span>
);

const Folder = () => (
  <svg viewBox="0 0 12 12" className="size-3 shrink-0" aria-hidden="true">
    <path d="M2 2l4-1v10l-4-1z" fill="#f7e27e" /><path d="M6 1l4 1v8l-4 1z" fill="#dfae35" />
  </svg>
);

const Taskbar = () => (
  <footer className="flex h-[21px] shrink-0 items-center bg-linear-to-b from-[#7c8488] to-[#838b8f]">
    <button aria-label="开始" className="w-[41px] shrink-0 pl-1.5">
      <svg viewBox="0 0 24 20" className="h-5 w-6" aria-hidden="true">
        <circle cx="12" cy="10" r="11" fill="#1d4c78" />
        <ellipse cx="12" cy="5" rx="9" ry="5" fill="#5f9cc9" />
        <path d="M6 6q3-2 6-.500l-1 4q-3-1.500-6 .3z" fill="#ec5a28" />
        <path d="M13 6q3 1 6-.500l-1 4q-3 1.500-6 .3z" fill="#83bf3b" />
        <path d="M5 10.500q3-2 6-.500l-1 4q-3-1.500-6 .3z" fill="#3d9be0" />
        <path d="M12 10.500q3 1 6-.500l-1 4q-3 1.500-6 .3z" fill="#f9c430" />
      </svg>
    </button>
    <Task label="我的经验_...">
      <svg viewBox="0 0 12 12" className="size-3 shrink-0" fill="none" aria-hidden="true">
        <circle cx="6" cy="6" r="5.500" fill="#2f9be0" />
        <path d="M3.500 6.300h5q0-3-2.500-3t-2.500 3t2.500 2.500q1.500 0 2-1" stroke="#fff" strokeWidth="1.300" />
      </svg>
    </Task>
    <div className="flex w-[88px] shrink-0 items-center justify-around px-0.5">
      <button aria-label="云盘">
        <svg viewBox="0 0 14 14" className="size-3" aria-hidden="true"><circle cx="7" cy="7" r="6.500" fill="#4a8fd0" /><path d="M3 9q0-3 3-3q1-2 4 0q3 1 2 4H4z" fill="#fff" /></svg>
      </button>
      <button aria-label="浏览器">
        <svg viewBox="0 0 14 14" className="size-3" aria-hidden="true"><path d="M1 12Q-1 3 12 1q3 8-6 11q-3 1-5 0z" fill="#2f93d1" /><path d="M3 10q3-6 9-8" stroke="#bfe3a0" fill="none" strokeWidth="1.500" /></svg>
      </button>
      <button className="size-3 rounded-sm bg-[#e0262c] text-[7px] leading-none font-bold text-white">du</button>
    </div>
    <Task label="加工图-机..."><Acad /></Task>
    <Task label="Drawing8...." active><Acad /></Task>
    <Task label="加工图-机..."><Acad /></Task>
    <button aria-label="表情" className="flex w-[30px] shrink-0 justify-center">
      <svg viewBox="0 0 12 12" className="size-3" aria-hidden="true"><circle cx="6" cy="6" r="5.500" fill="#f3bd2e" /><path d="M3 6q3 5 6 0" stroke="#b5531c" fill="none" /><circle cx="7.500" cy="3" r="2" fill="#fbe68a" /></svg>
    </button>
    <Task label="SOLIDWO..." className="w-[74px]">
      <svg viewBox="0 0 12 12" className="size-3 shrink-0" aria-hidden="true"><path d="M0 1q6-3 12 0v11H0z" fill="#8e1518" /><path d="M2 3h8v3H2z M3 8h2v2H3z M7 8h2v2H7z" fill="#f1d5d5" /></svg>
    </Task>
    <Task label="单相200k ...">
      <svg viewBox="0 0 12 12" className="size-3 shrink-0" fill="none" aria-hidden="true"><circle cx="7" cy="4.500" r="3.500" fill="#b9dbee" stroke="#6f9fbc" /><path d="M5 7l-4 4" stroke="#506b7b" strokeWidth="2" /></svg>
    </Task>
    <Task label="整理-机箱-..."><Folder /></Task>
    <Task label="整理-机箱-..."><Folder /></Task>
    <button aria-label="输入法" className="ml-2 size-3 shrink-0 rounded-full bg-[#ef4b23] text-[9px] leading-none font-bold text-white">S</button>
    <span className="ml-auto h-full w-2.5 bg-[#3d4549]" />
  </footer>
);

const SiteBadge = () => (
  <aside className="absolute right-2.5 bottom-0 flex h-[115px] w-[230px] items-center bg-white pl-[21px] text-black">
    <svg viewBox="0 0 62 52" className="h-[52px] w-[62px] shrink-0" aria-hidden="true">
      <path d="M4 22Q13 4 36 1Q60 0 60 19Q55 6 38 6Q18 6 4 22z" fill="#93c01f" />
      <path d="M31 13l4-3l6 2v16l-6 4v8h-4z M46 20l7 3v8l-7 5z" fill="#cfd2d6" />
      <path d="M4 28l10-4v16q-8-3-10-12z M18 12l12-4v31q-6 2-12 1z M35 23l10-5v16l-10 5z" fill="#1f4a9c" />
      <path d="M1 26Q-1 47 22 50Q50 50 60 22Q48 41 26 42Q7 42 1 26z" fill="#123f93" />
    </svg>
    <div className="flex flex-col">
      <span className='font-["Noto_Sans_CJK_SC",sans-serif] text-[25px] leading-[28px] font-black whitespace-nowrap'>土木工程网</span>
      <span className='font-["Open_Sans",sans-serif] text-[16px] leading-[18px] font-semibold italic'>www.civilcn.com</span>
    </div>
  </aside>
);

export default function App() {
  return (
    <div className='relative flex h-screen flex-col overflow-hidden bg-[#676767] font-["Noto_Sans","Noto_Sans_CJK_SC",sans-serif] leading-none'>
      <Header />
      <Toolbars />
      <Workspace />
      <CommandLine />
      <StatusBar />
      <Taskbar />
      <SiteBadge />
    </div>
  );
}
